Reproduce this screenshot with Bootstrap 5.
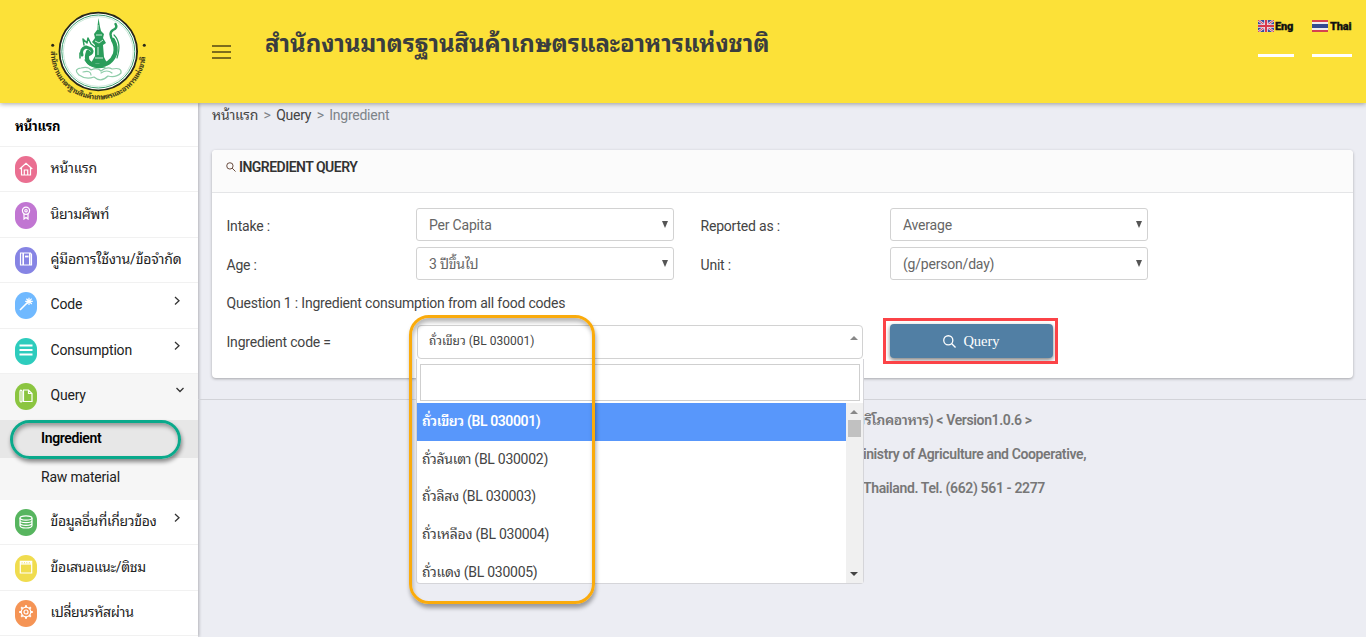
<!DOCTYPE html>
<html lang="th">
<head>
<meta charset="utf-8">
<title>Ingredient Query</title>
<link href="https://cdn.jsdelivr.net/npm/bootstrap@5.3.0/dist/css/bootstrap.min.css" rel="stylesheet">
<style>
body{font-family:Roboto,"Noto Sans Thai Looped",Loma,Waree,Garuda,Sarabun,"Noto Sans Thai","Noto Sans",sans-serif;font-size:14px;letter-spacing:-.2px;line-height:20px;color:#444;background:#ecedf3;height:637px;overflow:hidden}
.top-head{height:103px;background:#fce138;box-shadow:0 1px 5px rgba(0,0,0,.35);z-index:5;position:relative}
.brand{width:198px;height:103px}
.menu-btn{width:19px;margin:45px 0 0 14px;gap:4px}
.menu-btn i{height:2px;background:#7d6d1c}
.site-title{font-size:24px;line-height:32px;font-weight:700;color:#3a3d3f;margin:28px 0 0 34px;letter-spacing:-.1px;white-space:nowrap}
.lang{font-size:11px;line-height:13px;font-weight:900;color:#111;letter-spacing:-.2px;-webkit-text-stroke:.3px #111;border-bottom:3px solid #fff;height:37px;margin-top:20px}
.side{width:198px;background:#fff;box-shadow:1px 0 3px rgba(0,0,0,.25);color:#222}
.side-title{height:44px;padding:14px 15px 0;font-size:13px;color:#000;border-bottom:1px solid #f1f1f1}
.item{height:45.4px;padding:1px 0 0 15px;border-bottom:1px solid #f1f1f1;white-space:nowrap}
.ico{width:22px;height:27px;border-radius:11px;margin-right:13.5px;flex:none;display:flex;align-items:center;justify-content:center}
.ico svg{width:14px;height:14px;fill:none;stroke:#fff;stroke-width:1.2}
.chev{width:8px;height:8px;margin:-10px 17px 0 auto;fill:none;stroke:#333;stroke-width:1.3;overflow:visible}
.item span{margin-top:-3px}
.sub{height:42px;padding-left:41px;background:#f6f6f6;line-height:38px}
.sub.on{height:38px;background:#e7e7e7;font-weight:600;color:#000;line-height:37px;letter-spacing:-.35px}
.mark-green{position:absolute;left:10px;top:0;width:171px;height:39px;border:3px solid #0aa98b;border-radius:20px;box-shadow:1px 3px 4px rgba(0,0,0,.45),inset 1px 3px 4px rgba(0,0,0,.35)}
.crumbs{height:47px;padding:2px 0 0 14px;color:#7e8489;gap:5.5px;white-space:nowrap;letter-spacing:-.25px}
.crumbs b{font-weight:400;color:#444}
.panel{margin:0 13px 0 14px;height:227.5px;background:#fff;border-radius:4px;box-shadow:0 1px 3px rgba(0,0,0,.3)}
.panel-top{height:43px;background:#fbfbfb;border-bottom:1px solid #e4e5e7;border-radius:4px 4px 0 0;padding:7px 14px;font-weight:600;letter-spacing:-.52px;color:#333;white-space:nowrap}
.fields{display:grid;grid-template-columns:190px 258px 26px 190px 258px;grid-template-rows:33px 33px 33px 34px;row-gap:6px;padding:15px 14px;white-space:nowrap}
.fields label{padding:8px 0 0 .5px}
.pick{border:1px solid #d2d2d2;border-radius:3px;padding:6px 12px;color:#666;position:relative}
.pick:after{content:"";position:absolute;right:5px;top:12px;border:3.5px solid transparent;border-top:7px solid #555;border-bottom:0}
.combo{width:446px;height:34px;border:1px solid #d2d2d2;border-radius:4px;padding:5px 11px;font-size:12px;letter-spacing:0;position:relative}
.tri{border:4px solid transparent;border-bottom:4px solid #888;border-top:0;position:absolute}
.tri.dn{border-top:4px solid #444;border-bottom:0}
.drop{position:absolute;left:-2px;top:33px;width:448px;height:225px;background:#fff;border:1px solid #d5d5d9;border-top:0;border-radius:0 0 4px 4px;font-size:14px;letter-spacing:-.27px;z-index:3}
.find{height:37px;border:1px solid #cfcfcf;margin:5px 3px 2px}
.opts{height:180px;overflow:hidden;position:relative}
.opt{height:37.7px;width:429px;padding:8px 5px;line-height:20px;color:#444}
.opt.on{background:#5897fb;color:#fff;font-weight:600;letter-spacing:-.4px}
.rail{position:absolute;right:0;top:0;width:17px;height:180px;background:#f0f0f0}
.thumb{position:absolute;left:2px;top:17px;width:13px;height:17px;background:#c1c1c1}
.mark-amber{position:absolute;left:-9px;top:-11px;width:186px;height:289px;border:3px solid #faab0c;border-radius:20px;box-shadow:1px 4px 4px rgba(0,0,0,.35),inset 1px 4px 4px rgba(0,0,0,.28);z-index:4}
.go{width:163px;height:34px;margin-top:-1px;background:#517fa4;border-radius:4px;color:#fff;font:14.5px "Liberation Serif",serif;letter-spacing:0;box-shadow:0 2px 4px rgba(0,0,0,.5);position:relative;gap:7px}
.mark-red{position:absolute;left:-7px;top:-6px;width:175px;height:46px;border:3px solid #fb4347}
.foot{border-top:1px solid #d2d3d8;margin-top:21.5px;padding-top:3px;font-weight:600;color:#777;line-height:34px;letter-spacing:-.37px;white-space:nowrap}
</style>
</head>
<body>
<header class="top-head d-flex">
 <div class="brand">
  <svg width="198" height="103" viewBox="0 0 198 103" style="letter-spacing:0">
   <circle cx="98.3" cy="51.5" r="38.8" fill="#fff" stroke="#262719" stroke-width="1.8"/>
   <circle cx="98.3" cy="51.5" r="36.5" fill="none" stroke="#3c9f70" stroke-width="1"/>
   <circle cx="98.3" cy="51.5" r="34.9" fill="none" stroke="#a9d9c0" stroke-width=".6"/>
   <g fill="none" stroke="#2a9d5b" stroke-linecap="round" stroke-linejoin="round">
    <path stroke-width="4.2" d="M88 52Q84 63 95 65Q110 67 115 54Q117 47 113 40"/>
    <path stroke-width="2.4" d="M113 41Q108 33 113 30Q118 28 115.500 24"/>
    <path stroke-width="1.2" d="M117 58Q122 43 114 35M85 60Q91 70 105 67"/>
    <path stroke-width="3" d="M82 55Q80 49 86 47L91 49Q94 53 88 55"/>
    <path stroke-width="1.5" d="M84 45L83 39L87 43L88 38L91 44L95 47M80 58L80 53"/>
    <path stroke-width="1.2" stroke="#8fcdaa" d="M79 75Q73 69 81 68Q88 66 91 70Q97 67 101 71Q107 66 112 69Q122 67 121 73Q116 78 108 76Q101 83 94 77Q86 80 79 75M83 72Q91 70 91 75M101 73Q107 69 112 73"/>
   </g>
   <path fill="#2a9d5b" d="M98.5 18L100 27L101 31L104 34L103 38L106 43L103 45L104 57L107 63L91 63L95 56L95 45L92 42L95 38L94 34L97 30Z"/>
   <path stroke="#d3eddd" stroke-width="1" fill="none" d="M96 35H102M95 41L99 43L103 40M98 47V55M95 58H103M98 25V30"/>
   <path id="ring" fill="none" d="M50.9 49A47.5 47.5 0 1 0 145.7 49"/>
   <text font-size="7.2" font-weight="700" fill="#3b3819" textLength="145"><textPath href="#ring" startOffset="2">สำนักงานมาตรฐานสินค้าเกษตรและอาหารแห่งชาติ</textPath></text>
   <circle cx="52.7" cy="45.3" r="1.5" fill="#292819"/><circle cx="144.3" cy="45.3" r="1.5" fill="#292819"/>
  </svg>
 </div>
 <div class="menu-btn d-flex flex-column"><i></i><i></i><i></i></div>
 <h1 class="site-title">สำนักงานมาตรฐานสินค้าเกษตรและอาหารแห่งชาติ</h1>
 <div class="d-flex ms-auto" style="gap:18px;padding-right:14px">
  <div class="lang d-flex" style="width:36px;gap:1px"><svg width="16" height="12" viewBox="0 0 16 12" class="flex-shrink-0"><path fill="#394f9b" d="M0 0h16v12H0z"/><path stroke="#e8d9e0" stroke-width="2.4" d="M0 0L16 12M16 0L0 12"/><path stroke="#d64052" stroke-width="1" d="M0 0L16 12M16 0L0 12"/><path stroke="#f1e4e9" stroke-width="3.6" d="M8 0V12M0 6H16"/><path stroke="#d93a4b" stroke-width="2" d="M8 0V12M0 6H16"/></svg>Eng</div>
  <div class="lang d-flex" style="width:40px;gap:2px"><svg width="16" height="12" viewBox="0 0 16 12" class="flex-shrink-0"><path fill="#d54350" d="M0 0h16v12H0z"/><path fill="#eee" d="M0 2h16v8H0z"/><path fill="#334b91" d="M0 4h16v4H0z"/></svg>Thai</div>
 </div>
</header>
<div class="d-flex" style="height:534px">
 <aside class="side flex-shrink-0">
  <div class="side-title fw-bold">หน้าแรก</div>
  <div class="item d-flex align-items-center"><div class="ico" style="background:#ea6f91"><svg viewBox="0 0 14 14" style="margin-top:-2px"><path d="M.7 7L7 1.2L13.3 7M2.5 5.5V13H11.5V5.5M5.3 13V8H8.7V13"/></svg></div><span>หน้าแรก</span></div>
  <div class="item d-flex align-items-center"><div class="ico" style="background:#c176d2"><svg viewBox="0 0 14 14" style="margin-top:-4px"><circle cx="7" cy="4.7" r="3.6"/><circle cx="7" cy="4.7" r="1.2"/><path d="M5 8V13L7 11.5L9 13V8"/></svg></div><span>นิยามศัพท์</span></div>
  <div class="item d-flex align-items-center"><div class="ico" style="background:#8684e4"><svg viewBox="0 0 14 14" style="margin-top:-2px"><path d="M1.500 1H11.500L12.500 2.500V13H1.500Z"/><path stroke-width="1.600" d="M4.200 1V13M10.800 1V13"/><path stroke-width="1.800" d="M6 4.500H9.500"/></svg></div><span>คู่มือการใช้งาน/ข้อจำกัด</span></div>
  <div class="item d-flex align-items-center"><div class="ico" style="background:#70b9ff"><svg viewBox="0 0 14 14" style="margin-top:-4px"><path stroke-width="1.6" d="M1 13L8.5 5.5"/><path d="M10 .7V8M6.2 4.3H13.8M7.4 1.7L12.8 7M12.7 1.7L7.4 7"/></svg></div><span>Code</span><svg class="chev" viewBox="0 0 8 8"><path d="M2 0L6 3.7L2 7.4"/></svg></div>
  <div class="item d-flex align-items-center"><div class="ico" style="background:#2dccbd"><svg viewBox="0 0 14 14" style="margin-top:-2px"><path stroke-width="1.8" d="M.5 2.5H13.5M.5 7H13.5M.5 11.5H13.5"/></svg></div><span>Consumption</span><svg class="chev" viewBox="0 0 8 8"><path d="M2 0L6 3.7L2 7.4"/></svg></div>
  <div class="item d-flex align-items-center" style="background:#f6f6f6;border:0;height:46px;padding-top:0"><div class="ico" style="background:#8bc540"><svg viewBox="0 0 14 14" style="margin-top:-2px"><path d="M4.5 1H9.5L13 4.5V12.5H4.5ZM9.5 1V4.5H13M3 1.8Q1 0 1 3V11Q1 14 3 12.5V1.8"/></svg></div><span>Query</span><svg class="chev" style="margin:-13px 14px 0 auto" viewBox="0 0 8 8"><path d="M.5 2L4 5.5L7.5 2"/></svg></div>
  <div class="sub on position-relative">Ingredient<div class="mark-green"></div></div>
  <div class="sub">Raw material</div>
  <div class="item d-flex align-items-center"><div class="ico" style="background:#57b55f"><svg viewBox="0 0 14 14" style="margin-top:-2px"><ellipse cx="7" cy="3" rx="6" ry="2.2"/><path d="M1 3V10.5Q1 13 7 13T13 10.5V3M1 5.5Q1 7.7 7 7.7T13 5.5M1 8Q1 10.4 7 10.4T13 8"/></svg></div><span style="letter-spacing:-.35px">ข้อมูลอื่นที่เกี่ยวข้อง</span><svg class="chev" viewBox="0 0 8 8"><path d="M2 0L6 3.7L2 7.4"/></svg></div>
  <div class="item d-flex align-items-center"><div class="ico" style="background:#f0dc4e"><svg viewBox="0 0 14 14" style="margin-top:-2px"><path d="M1.3 1.3H12.7V13H1.3Z"/><path stroke-width="2.5" stroke-dasharray="1.7 .7" d="M1 2.2H13"/><path d="M1 4H13"/></svg></div><span style="letter-spacing:-.35px">ข้อเสนอแนะ/ติชม</span></div>
  <div class="item d-flex align-items-center"><div class="ico" style="background:#f59455"><svg viewBox="0 0 14 14" style="margin-top:-3px"><circle cx="7" cy="7" r="4.8"/><circle cx="7" cy="7" r="2"/><path stroke-width="2" d="M7 .2V2.2M7 11.8V13.8M.2 7H2.2M11.8 7H13.8M2.2 2.2L3.6 3.6M10.4 10.4L11.8 11.8M11.8 2.2L10.4 3.6M3.6 10.4L2.2 11.8"/></svg></div><span style="letter-spacing:-.3px">เปลี่ยนรหัสผ่าน</span></div>
 </aside>
 <main class="flex-grow-1">
  <div class="crumbs d-flex"><b>หน้าแรก</b><span>&gt;</span><b>Query</b><span>&gt;</span><span>Ingredient</span></div>
  <section class="panel">
   <div class="panel-top"><svg width="10" height="10" viewBox="0 0 11 11" fill="none" stroke="#5b3a2c" style="margin:-3px 0 0 0"><circle cx="4.3" cy="4.3" r="3.5"/><path d="M6.8 6.8L10.5 10.5"/></svg> INGREDIENT QUERY</div>
   <div class="fields">
    <label>Intake :</label><div class="pick">Per Capita</div><i></i><label>Reported as :</label><div class="pick">Average</div>
    <label>Age :</label><div class="pick">3 ปีขึ้นไป</div><i></i><label>Unit :</label><div class="pick">(g/person/day)</div>
    <label style="grid-column:1/6;padding-top:7px">Question 1 : Ingredient consumption from all food codes</label>
    <label style="padding-top:7px">Ingredient code =</label>
    <div class="combo" style="grid-column:2/5;margin-left:1px">ถั่วเขียว (BL 030001)<i class="tri" style="right:4px;top:10px"></i>
     <div class="drop">
      <div class="find"></div>
      <div class="opts">
       <div class="opt on">ถั่วเขียว (BL 030001)</div><div class="opt">ถั่วลันเตา (BL 030002)</div><div class="opt">ถั่วลิสง (BL 030003)</div><div class="opt">ถั่วเหลือง (BL 030004)</div><div class="opt">ถั่วแดง (BL 030005)</div>
       <div class="rail"><i class="tri" style="left:4px;top:7px"></i><i class="thumb"></i><i class="tri dn" style="left:4px;bottom:7px"></i></div>
      </div>
     </div>
     <div class="mark-amber"></div>
    </div>
    <div class="go d-flex align-items-center justify-content-center"><svg width="13" height="13" viewBox="0 0 14 14" fill="none" stroke="#fff" stroke-width="1.4"><circle cx="5.7" cy="5.7" r="4.9"/><path d="M9.2 9.2L13.5 13.5"/></svg>Query<div class="mark-red"></div></div>
   </div>
  </section>
  <footer class="foot"><div style="padding-left:658px">บริโภคอาหาร) &lt; Version1.0.6 &gt;</div><div style="padding-left:653px">Ministry of Agriculture and Cooperative,</div><div style="padding-left:665px">Thailand. Tel. (662) 561 - 2277</div></footer>
 </main>
</div>
<script src="https://cdn.jsdelivr.net/npm/bootstrap@5.3.0/dist/js/bootstrap.bundle.min.js"></script>
</body>
</html>
